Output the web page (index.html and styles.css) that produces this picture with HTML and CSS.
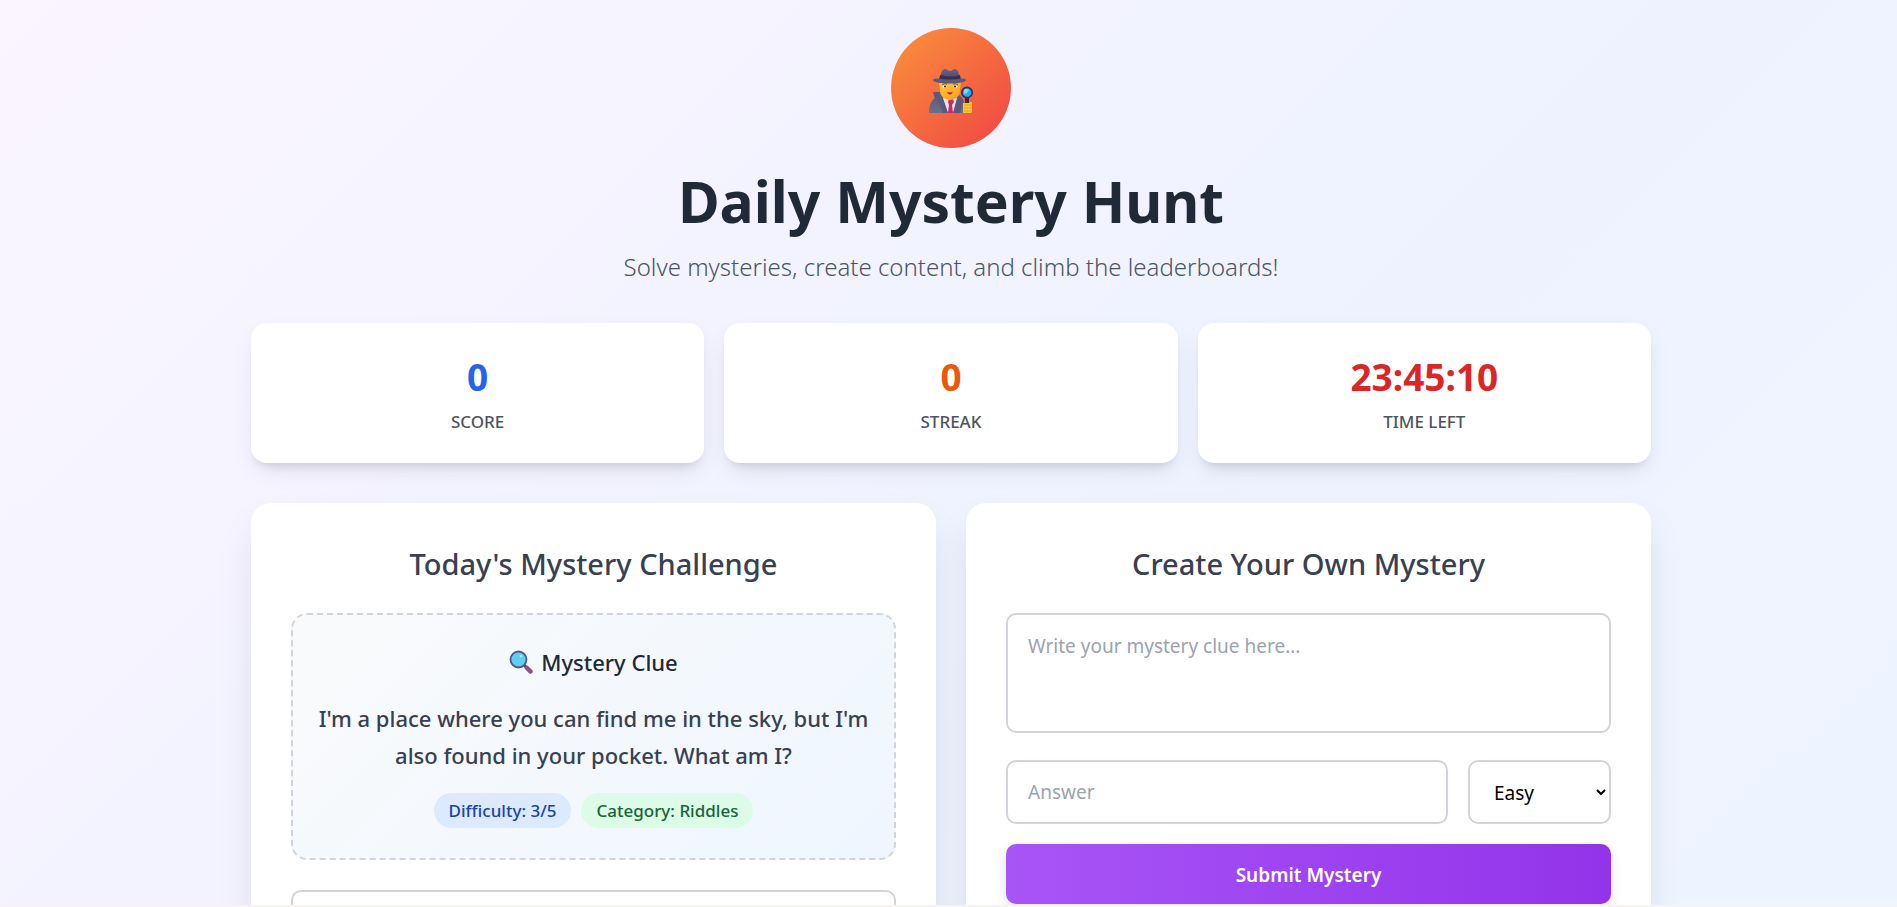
FILE: index.html
```html
<!DOCTYPE html>
<html lang="en">
<head>
<meta charset="utf-8">
<meta name="viewport" content="width=device-width, initial-scale=1">
<title>Daily Mystery Hunt</title>
<link rel="stylesheet" href="styles.css">
</head>
<body>
<div class="viewport">
  <main class="container">
    <header class="header">
      <div class="logo">
        <svg class="detective" viewBox="2 0 44 46" aria-hidden="true">
          <defs>
            <linearGradient id="coat" x1="0" y1="0" x2="0" y2="1"><stop offset="0" stop-color="#5c5779"/><stop offset="1" stop-color="#6a7088"/></linearGradient>
            <linearGradient id="hat" x1="0" y1="0" x2="0" y2="1"><stop offset="0" stop-color="#66648a"/><stop offset="1" stop-color="#4b4965"/></linearGradient>
            <linearGradient id="skin" x1="0" y1="0" x2="1" y2="1"><stop offset="0" stop-color="#ffc83d"/><stop offset="1" stop-color="#f79c1d"/></linearGradient>
          </defs>
          <path d="M2 45c0-9 3-14 9-17l12-3 10 3c4 2 5 8 5 17z" fill="url(#coat)"/>
          <path d="M16 30l7-4 7 4-4 15h-5z" fill="#e6e1ee"/>
          <path d="M21 34l1-3 4 0 1 3-2 3 1 8h-5l1-8z" fill="#d3265f"/>
          <path d="M6 24l7 0 8 21h-5l-6-15-2 1zM32 27l-6 18h7l3-13z" fill="#5c597c"/>
          <path d="M12 14h22l-1 9c0 5-5 9-10 9s-10-4-10-9z" fill="url(#skin)"/>
          <path d="M15 17q2-2 5-1M26 16q3-1 5 1" stroke="#87461d" stroke-width="1" fill="none"/>
          <ellipse cx="17.500" cy="18.500" rx="2" ry="1.200" fill="#fff"/><ellipse cx="28.500" cy="18.500" rx="2" ry="1.200" fill="#fff"/>
          <circle cx="18" cy="18.500" r="1.100" fill="#41233d"/><circle cx="28" cy="18.500" r="1.100" fill="#41233d"/>
          <path d="M20 24q4 1 6-.5-1 3-3 3t-3-2.500z" fill="#bb1d52"/>
          <path d="M13 11C14 5 15 1 18 1c2 0 3 2 5 2s3-2 5-2c3 0 4 5 5 10z" fill="url(#hat)"/>
          <path d="M13 7q10 3 20 0l1 5H12z" fill="#38304f"/>
          <path d="M6 12q0-2 4-1.500 12 2 25 0 4-.5 4 1.500c0 2-8 3.500-17 3.500S6 14 6 12z" fill="#5a5977"/>
          <path d="M36 45V35l9-1v10l-1 1z" fill="#ffc72e"/>
          <path d="M37 37h8M37 40h8M37 43h7" stroke="#eea020" stroke-width="1"/>
          <path d="M38 29h4v6h-4z" fill="#392b43"/>
          <circle cx="40" cy="24.500" r="5.200" fill="#22aef2" stroke="#392f52" stroke-width="1.700"/>
          <path d="M37 22q2-2 5 0l-2 3-3 1z" fill="#7bdcfb"/>
        </svg>
      </div>
      <h1 class="title">Daily Mystery Hunt</h1>
      <p class="subtitle">Solve mysteries, create content, and climb the leaderboards!</p>
    </header>
    <section class="stats">
      <div class="stat"><div class="value value-score">0</div><div class="label">SCORE</div></div>
      <div class="stat"><div class="value value-streak">0</div><div class="label">STREAK</div></div>
      <div class="stat"><div class="value value-time">23:45:10</div><div class="label">TIME LEFT</div></div>
    </section>
    <div class="panels">
      <section class="panel">
        <h2 class="panel-title">Today's Mystery Challenge</h2>
        <div class="clue">
          <h3 class="clue-title">
            <svg class="magnifier" viewBox="0 0 24 24" aria-hidden="true">
              <path d="M15 15l6 6" stroke="#6c3a74" stroke-width="3"/>
              <path d="M18 18l3.500 3.500" stroke="#89518f" stroke-width="4.500" stroke-linecap="round"/>
              <circle cx="9.500" cy="9.500" r="8" fill="#62cdec" stroke="#4c5597" stroke-width="1.800"/>
              <circle cx="12" cy="6" r="1.500" fill="#a8e8fa"/>
            </svg>
            Mystery Clue
          </h3>
          <p class="clue-text">I'm a place where you can find me in the sky, but I'm also found in your pocket. What am I?</p>
          <div class="tags"><span class="tag tag-blue">Difficulty: 3/5</span><span class="tag tag-green">Category: Riddles</span></div>
        </div>
        <input class="field guess" type="text" aria-label="Your answer">
      </section>
      <section class="panel">
        <h2 class="panel-title">Create Your Own Mystery</h2>
        <form class="form">
          <textarea class="field clue-input" placeholder="Write your mystery clue here..." aria-label="Mystery clue"></textarea>
          <div class="row">
            <input class="field" type="text" placeholder="Answer" aria-label="Answer">
            <select class="field level" aria-label="Difficulty"><option>Easy</option><option>Medium</option><option>Hard</option></select>
          </div>
          <button class="submit" type="button">Submit Mystery</button>
        </form>
      </section>
    </div>
  </main>
</div>
<div class="edge"></div>
</body>
</html>
```
FILE: styles.css
```css
* { box-sizing: border-box; }
body {
  margin: 0;
  height: 100vh;
  display: flex;
  flex-direction: column;
  overflow: hidden;
  font-family: "Segoe UI", "Noto Sans", "Open Sans", sans-serif;
  color: #1f2937;
}
h1, h2, h3, p { margin: 0; }
.viewport {
  flex: 1;
  min-height: 0;
  overflow: hidden;
  padding: 28px 0 0 5px;
  background: linear-gradient(135deg, #faf5ff 0%, #eef2ff 50%, #eff6ff 100%) 0 0 / 100% 1500px;
}
.edge { height: 2px; background: #f8f3f0; }
.container { max-width: 1400px; margin: 0 auto; }
.header { text-align: center; margin-bottom: 38px; }
.logo {
  width: 120px;
  height: 120px;
  margin: 0 auto 15px;
  padding-top: 6px;
  border-radius: 50%;
  background: linear-gradient(135deg, #fb923c, #ef4444);
  display: flex;
  align-items: center;
  justify-content: center;
}
.detective { width: 44px; height: 46px; }
.title { font-size: 57px; font-weight: 700; line-height: 76px; }
.subtitle { font-size: 24px; font-weight: 350; line-height: 36px; margin-top: 10px; color: #4b5563; }
.stats { display: grid; grid-template-columns: repeat(3, 1fr); gap: 20px; margin-bottom: 40px; }
.stat {
  height: 140px;
  padding: 30px;
  text-align: center;
  background: #fff;
  border-radius: 16px;
  box-shadow: 0 10px 25px -5px rgba(0, 0, 0, .1), 0 8px 10px -6px rgba(0, 0, 0, .12);
}
.value { font-size: 37px; font-weight: 700; line-height: 48px; margin-bottom: 8px; }
.value-score { color: #2563eb; }
.value-streak { color: #ea580c; }
.value-time { color: #dc2626; }
.label { font-size: 17px; font-weight: 500; line-height: 26px; color: #4b5563; }
.panels { display: grid; grid-template-columns: 1fr 1fr; gap: 30px; }
.panel {
  padding: 40px;
  background: #fff;
  border-radius: 20px;
  box-shadow: 0 20px 40px -5px rgba(0, 0, 0, .1);
}
.panel-title { font-size: 29px; font-weight: 500; line-height: 42px; margin-bottom: 28px; text-align: center; color: #374151; }
.clue {
  padding: 27px 20px 30px;
  margin-bottom: 30px;
  text-align: center;
  border: 2px dashed #d1d5db;
  border-radius: 16px;
  background: linear-gradient(135deg, #f9fafb, #eff6ff);
}
.clue-title { display: flex; align-items: center; justify-content: center; gap: 8px; font-size: 22px; font-weight: 500; line-height: 40px; margin-bottom: 18px; }
.magnifier { width: 24px; height: 24px; }
.clue-text { font-size: 22px; font-weight: 500; line-height: 37px; margin-bottom: 19px; color: #374151; }
.tags { display: flex; justify-content: center; gap: 10px; }
.tag { padding: 5px 15px; border-radius: 20px; font-size: 17px; font-weight: 500; line-height: 25px; }
.tag-blue { color: #1e40af; background: #dbeafe; }
.tag-green { color: #166534; background: #dcfce7; }
.field {
  width: 100%;
  height: 64px;
  padding: 20px;
  font: inherit;
  font-size: 19px;
  line-height: 24px;
  border: 2px solid #d1d5db;
  border-radius: 10px;
  background: #fff;
}
.field::placeholder { color: #9ca3af; opacity: 1; }
.form { display: flex; flex-direction: column; }
.clue-input { display: block; height: 120px; padding-top: 19px; margin-bottom: 27px; resize: none; }
.row { display: grid; grid-template-columns: 1fr 143px; gap: 20px; margin-bottom: 20px; }
.level { padding: 2px 2px 0 20px; color: #000; }
.submit {
  height: 60px;
  padding-top: 3px;
  border: 0;
  border-radius: 10px;
  font: inherit;
  font-size: 19px;
  font-weight: 600;
  color: #fff;
  background: linear-gradient(90deg, #a855f7, #9333ea);
  box-shadow: 0 4px 12px rgba(0, 0, 0, .12);
}
```
